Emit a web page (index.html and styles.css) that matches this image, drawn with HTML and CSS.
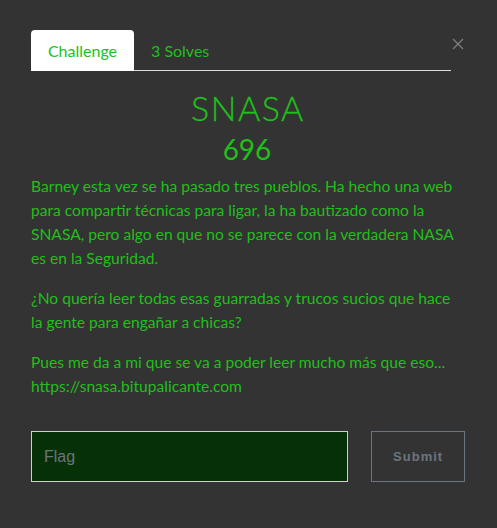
FILE: index.html
```html
<!DOCTYPE html>
<html>
<head>
<meta charset="utf-8">
<link rel="stylesheet" href="styles.css">
</head>
<body>
<div class="modal">
  <div class="tabs-row">
    <div class="tabs">
      <div class="tab active">Challenge</div>
      <div class="tab">3 Solves</div>
    </div>
    <div class="close">
      <svg width="12" height="12" viewBox="0 0 12 12"><path d="M1 1 L11 11 M11 1 L1 11" stroke="#7f7f7f" stroke-width="1.3" fill="none"/></svg>
    </div>
  </div>
  <h1 class="title">SNASA</h1>
  <h3 class="value">696</h3>
  <div class="desc">
    <p>Barney esta vez se ha pasado tres pueblos. Ha hecho una web para compartir técnicas para ligar, la ha bautizado como la SNASA, pero algo en que no se parece con la verdadera NASA es en la Seguridad.</p>
    <p>¿No quería leer todas esas guarradas y trucos sucios que hace la gente para engañar a chicas?</p>
    <p>Pues me da a mi que se va a poder leer mucho más que eso... https://snasa.bitupalicante.com</p>
  </div>
  <form class="flag-form">
    <input class="flag-input" type="text" placeholder="Flag">
    <button class="submit" type="button">Submit</button>
  </form>
</div>
</body>
</html>
```
FILE: styles.css
```css
html, body {
  margin: 0;
  padding: 0;
  background: #333333;
  height: 100%;
}
body {
  font-family: Lato, "Liberation Sans", sans-serif;
  color: #21bf1b;
}
.modal {
  padding: 30px 32px 0 31px;
}
.tabs-row {
  display: flex;
  align-items: flex-start;
}
.tabs {
  display: flex;
  width: 420px;
  border-bottom: 1px solid #dddddd;
  height: 40px;
}
.tab {
  font-size: 16px;
  padding: 0 17px;
  line-height: 42px;
  color: #21bf1b;
}
.tab.active {
  background: #ffffff;
  border-radius: 4px 4px 0 0;
  width: 103px;
  box-sizing: border-box;
  text-align: center;
  padding: 0;
  height: 41px;
}
.close {
  margin-left: 1px;
  margin-top: 8px;
  width: 12px;
  height: 12px;
  display: flex;
}
.title {
  width: 432px;
  text-align: center;
  font-weight: 300;
  font-size: 34px;
  margin: 17px 0 0;
  line-height: 40px;
  letter-spacing: 1.5px;
  padding-left: 2px;
  box-sizing: border-box;
  -webkit-text-stroke: 0.3px #21bf1b;
}
.value {
  width: 432px;
  text-align: center;
  font-weight: 400;
  font-size: 28px;
  margin: 4px 0 0;
  line-height: 34px;
}
.desc {
  width: 434px;
  font-size: 15.6px;
  line-height: 24px;
  margin-top: 8px;
}
.desc p {
  margin: 0 0 16px;
}
.flag-form {
  display: flex;
  margin-top: 33px;
  gap: 23px;
}
.flag-input {
  width: 318px;
  height: 51px;
  box-sizing: border-box;
  background: #063006;
  border: 1px solid #cfcfcf;
  font-family: "Liberation Sans", Arial, sans-serif;
  font-size: 16px;
  padding: 0 12px;
  color: #6c757d;
  outline: none;
}
.flag-input::placeholder {
  color: #6c757d;
}
.submit {
  width: 94px;
  height: 51px;
  background: transparent;
  border: 1px solid #6c757d;
  color: #6c757d;
  font-family: "Liberation Sans", Arial, sans-serif;
  font-weight: 700;
  font-size: 13px;
  letter-spacing: 1px;
}
```
